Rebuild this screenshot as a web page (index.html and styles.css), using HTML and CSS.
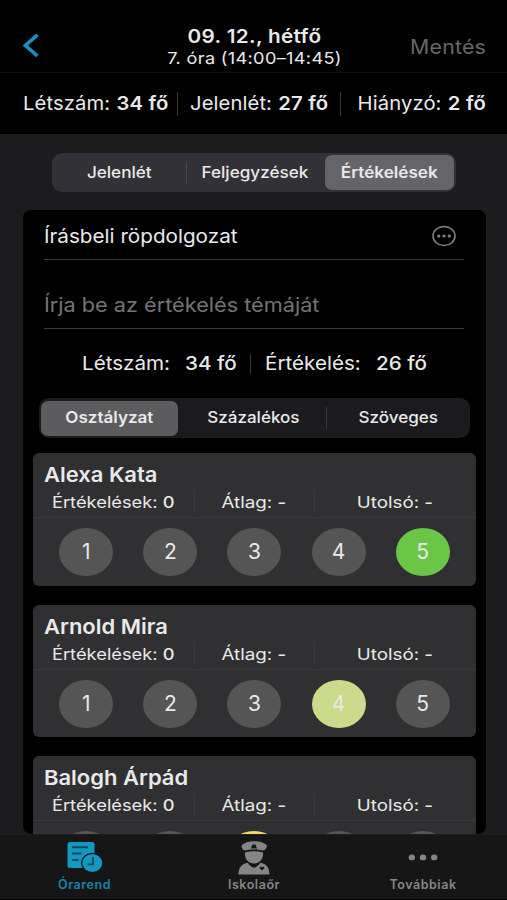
FILE: index.html
```html
<!DOCTYPE html>
<html lang="hu">
<head>
<meta charset="utf-8">
<title>Értékelések</title>
<link rel="stylesheet" href="styles.css">
</head>
<body>
<div class="app">
  <header class="nav">
    <svg class="back" width="18" height="26" viewBox="0 0 18 26"><path d="M15.400 2.800 3.400 13.400l12 10.600" fill="none" stroke="#1d8fbd" stroke-width="3.600"/></svg>
    <div class="heading"><h1>09. 12., hétfő</h1><p>7. óra (14:00–14:45)</p></div>
    <span class="save">Mentés</span>
  </header>
  <section class="totals">
    <span class="t1">Létszám: <b>34 fő</b></span><i></i><span class="t2">Jelenlét: <b>27 fő</b></span><i></i><span class="t3">Hiányzó: <b>2 fő</b></span>
  </section>
  <main class="content">
    <div class="segment views"><span><em>Jelenlét</em></span><i></i><span><em>Feljegyzések</em></span><span class="on"><em>Értékelések</em></span></div>
    <section class="panel">
      <div class="field kind"><em>Írásbeli röpdolgozat</em>
        <svg width="26" height="22" viewBox="0 0 26 22"><ellipse cx="13" cy="11" rx="11" ry="9.6" fill="none" stroke="#858585" stroke-width="1.5"/><g fill="#858585"><circle cx="7.8" cy="11" r="1.6"/><circle cx="13" cy="11" r="1.6"/><circle cx="18.2" cy="11" r="1.6"/></g></svg>
      </div>
      <div class="field topic"><em>Írja be az értékelés témáját</em></div>
      <div class="summary"><span class="s1"><em>Létszám:</em></span><b class="s2"><em>34 fő</em></b><i></i><span class="s3"><em>Értékelés:</em></span><b class="s4"><em>26 fő</em></b></div>
      <div class="segment modes"><span class="on"><em>Osztályzat</em></span><span><em>Százalékos</em></span><i></i><span><em>Szöveges</em></span></div>
      <div class="students">
        <article class="student">
          <h2>Alexa Kata</h2>
          <div class="facts"><span><em>Értékelések: <b>0</b></em></span><span><em>Átlag: <b>-</b></em></span><span><em>Utolsó: <b>-</b></em></span></div>
          <div class="grades"><span>1</span><span>2</span><span>3</span><span>4</span><span class="five">5</span></div>
        </article>
        <article class="student">
          <h2>Arnold Mira</h2>
          <div class="facts"><span><em>Értékelések: <b>0</b></em></span><span><em>Átlag: <b>-</b></em></span><span><em>Utolsó: <b>-</b></em></span></div>
          <div class="grades"><span>1</span><span>2</span><span>3</span><span class="four">4</span><span>5</span></div>
        </article>
        <article class="student">
          <h2>Balogh Árpád</h2>
          <div class="facts"><span><em>Értékelések: <b>0</b></em></span><span><em>Átlag: <b>-</b></em></span><span><em>Utolsó: <b>-</b></em></span></div>
          <div class="grades"><span></span><span></span><span class="three"></span><span></span><span></span></div>
        </article>
      </div>
    </section>
  </main>
  <nav class="tabs">
    <a class="active"><svg width="38" height="35" viewBox="0 0 38 35"><rect x="1.500" y="1" width="27" height="26" rx="2.500" fill="#1199c4"/><path d="M6 6.200h16M6 12.500h9.500M6 19h6.500" stroke="#12485b" stroke-width="2"/><ellipse cx="26.300" cy="22" rx="11.200" ry="10.200" fill="#161616"/><ellipse cx="26.300" cy="22" rx="10" ry="9" fill="#1199c4"/><path d="M27 16v7.300h-5.400" fill="none" stroke="#12485b" stroke-width="1.800"/></svg><span>Órarend</span></a>
    <a><svg width="38" height="35" viewBox="0 0 38 35"><g fill="#858585"><path d="M6.500 4.400C9 1.700 13.500 .2 19 .2s10.500 1.500 13 4.200c-.2 2.600-1.600 4.200-3.600 5.200-5.600-1.500-13.200-1.500-18.800 0-2-1-2.900-2.600-3.100-5.200Z"/><path d="M9.900 11.400c5.800-1.600 12.400-1.600 18.200 0 .2 6.300-3 11-9.100 11s-9.300-4.700-9.100-11Z"/><path d="M3.500 33.500c0-6.500 2.700-10.300 8.500-11.800L19 26l7-4.300c5.800 1.500 8.500 5.300 8.500 11.800Z"/></g><path d="M16 7.600 17.400 3.600h3.200L22 7.600Z" fill="#161616"/><path d="m14.300 22.600 3.700 2.800h2l3.700-2.800" fill="none" stroke="#161616" stroke-width="2"/><path d="m27 29.400-2.600-2.400 1.200-1.400 1.400.8 1.400-.8 1.200 1.400Z" fill="#161616"/></svg><span>Iskolaőr</span></a>
    <a><svg width="38" height="35" viewBox="0 0 38 35"><g fill="#858585"><ellipse cx="7.800" cy="16.400" rx="3.200" ry="2.900"/><ellipse cx="19" cy="16.400" rx="3.200" ry="2.900"/><ellipse cx="30.200" cy="16.400" rx="3.200" ry="2.900"/></g></svg><span>Továbbiak</span></a>
  </nav>
</div>
</body>
</html>
```
FILE: styles.css
```css
* { box-sizing: border-box; margin: 0; padding: 0; }
body { background: #000; font-family: Inter, "Liberation Sans", sans-serif; color: #e9e9e9; }
.app { width: 507px; height: 900px; overflow: hidden; display: flex; flex-direction: column; white-space: nowrap; border-bottom: 1px solid #000; }
i { display: block; flex: none; width: 1px; background: #38383a; }
b { font-weight: 600; }
/* slightly extended lettering */
em { display: inline-block; font-style: normal; transform: scaleX(1.07); }

.nav { height: 73px; flex: none; display: grid; grid-template-columns: 96px 1fr 96px; padding: 0 21px 0 22px; border-bottom: 1px solid #111; }
.back { margin-top: 32px; }
.heading { text-align: center; padding: 25px 0 0 1px; }
h1 { font-size: 19px; line-height: 24px; font-weight: 600; letter-spacing: .3px; transform: scaleX(1.09); }
.heading p { font-size: 16.500px; line-height: 18px; letter-spacing: .3px; transform: scaleX(1.1); }
.save { font-size: 20px; line-height: 26px; padding-top: 34px; text-align: right; color: #68686a; letter-spacing: .2px; transform: scaleX(1.065); transform-origin: right; }

.totals { height: 61px; flex: none; display: flex; align-items: center; padding: 0 21px 0 23px; font-size: 19px; letter-spacing: .1px; word-spacing: .4px; }
.totals i { height: 24px; }
.totals span { transform: scaleX(1.064); }
.t1 { width: 154px; transform-origin: left; }
.t2 { width: 162px; padding-left: 12px; transform-origin: 12px 50%; }
.t3 { flex: 1; text-align: right; transform-origin: right; }

.content { height: 700px; flex: none; background: #1c1c1e; padding: 19px 21px 0 23px; }
.segment { display: flex; align-items: center; border-radius: 10px; font-size: 16px; font-weight: 500; text-align: center; }
.segment span { height: 35px; line-height: 35px; border-radius: 7px; }
.segment i { height: 22px; }
.views { width: 404px; height: 39px; margin: 0 0 18px 29px; background: #323137; padding: 0 2px; }
.views i { background: #48484d; }
.views span:nth-child(1) { width: 132px; padding-right: 2px; }
.views span:nth-child(3) { width: 136px; padding-right: 1px; }
.views .on { width: 129px; margin-left: 2px; background: #656569; font-weight: 600; }

.panel { height: 624px; border-radius: 8px; background: #000; overflow: hidden; }
.field { display: flex; justify-content: space-between; margin: 0 22px 0 21px; border-bottom: 1px solid #3b3b3c; }
.field em { transform: scaleX(1.088); transform-origin: left; }
.kind { height: 50px; font-size: 19px; line-height: 53px; }
.kind svg { margin: 15px 7px 0 0; }
.topic { height: 69px; font-size: 20px; line-height: 90px; color: #747476; }
.topic em { transform: scaleX(1.084); }
.summary { height: 69px; display: flex; align-items: center; padding-left: 59px; font-size: 19px; line-height: 24px; }
.summary em { transform: scaleX(1.085); transform-origin: left; }
.summary span, .summary b { padding-top: 1px; }
.summary i { height: 20px; }
.summary b { font-weight: 500; }
.s1 { width: 103px; }
.s2 { width: 65px; }
.summary .s3 { width: 125px; padding-left: 14px; }
.modes { width: 431px; height: 40px; margin-left: 16px; background: #1b1b1f; padding: 0 2px; }
.modes span { line-height: 33px; }
.modes .on { width: 137px; background: #5c5c5f; font-weight: 600; }
.modes span:nth-child(2) { width: 148px; padding-left: 2px; }
.modes span:nth-child(4) { flex: 1; padding-left: 1px; }
.modes em { transform: scaleX(1.065); }

.students { display: flex; flex-direction: column; gap: 19.200px; margin: 15px 10px 0; }
.student { height: 132.500px; flex: none; border-radius: 6px; background: #303032; }
h2 { font-size: 20.500px; line-height: 26px; font-weight: 600; padding: 9px 0 0 11px; transform: scaleX(1.072); transform-origin: 11px 50%; }
.facts { height: 30px; display: grid; grid-template-columns: 162px 120px 1fr; font-size: 16.200px; border-bottom: 1px solid #39393b; }
.facts span { height: 22px; margin-top: 3px; line-height: 22px; text-align: center; border-right: 1px solid #3a3a3c; }
.facts span:nth-child(1) { padding-right: 1px; }
.facts span:nth-child(2) { padding-right: 1px; }
.facts span:nth-child(3) { padding-right: 2px; border: 0; }
.facts em { transform: scaleX(1.13); }
.facts span + span em { transform: scaleX(1.16); }
.facts b { font-weight: 500; }
.grades { display: flex; gap: 30.100px; padding: 10px 0 0 26.300px; }
.grades span { width: 54px; height: 48px; flex: none; border-radius: 50%; background: #555556; font-size: 21px; line-height: 48px; text-align: center; }
.grades .five { background: #6bc648; }
.grades .four { background: #cbdb8b; }
.grades .three { background: #f5d766; }

.tabs { height: 65px; flex: none; background: #161616; display: grid; grid-template-columns: repeat(3, 169px); color: #858585; border-top: 1px solid #1e1e1f; }
.tabs a { display: flex; flex-direction: column; align-items: center; padding-top: 6px; font-size: 12.500px; line-height: 16px; font-weight: 600; letter-spacing: .55px; }
.tabs a + a { padding-left: 1px; }
.tabs svg { flex: none; height: 35px; margin-bottom: 1px; }
.tabs .active { color: #1585aa; }
```
